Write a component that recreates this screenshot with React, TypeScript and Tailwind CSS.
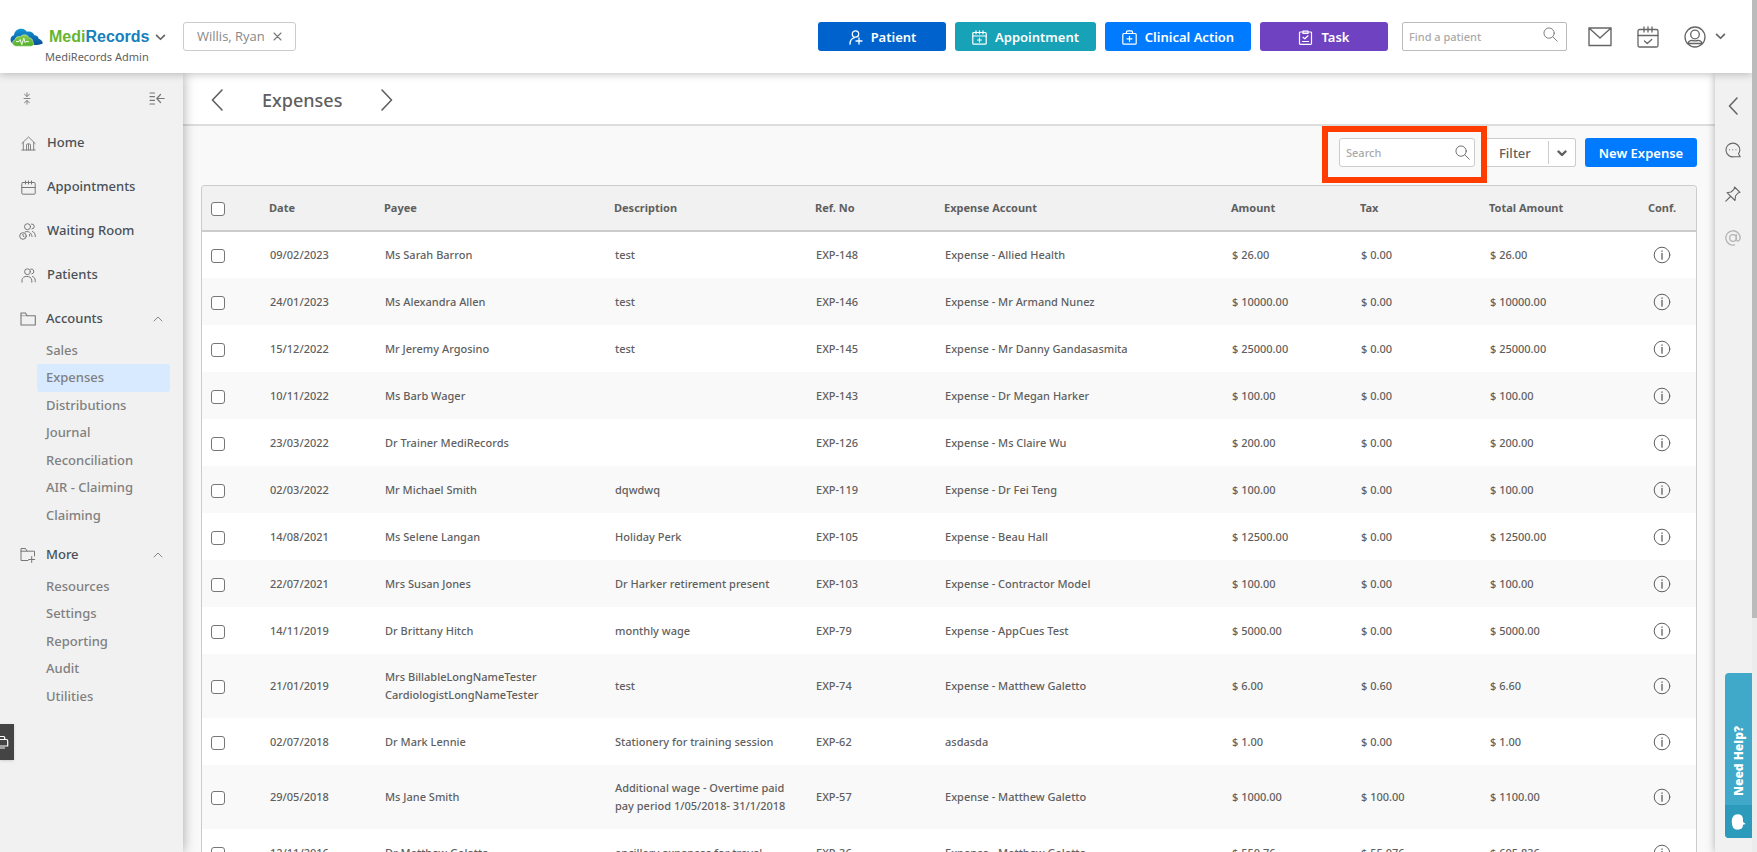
import React from "react";
import type { ReactNode } from "react";

type IconProps = { className?: string; children?: ReactNode; box?: string; sw?: number };

function Svg({ className = "", children, box = "0 0 24 24", sw = 1.5 }: IconProps) {
  return (
    <svg
      viewBox={box}
      className={className}
      fill="none"
      stroke="currentColor"
      strokeWidth={sw}
      strokeLinecap="round"
      strokeLinejoin="round"
      aria-hidden="true"
    >
      {children}
    </svg>
  );
}

function CloudLogo() {
  return (
    <svg viewBox="0 0 33 19" className="h-[19px] w-[33px]" aria-hidden="true">
      <defs>
        <linearGradient id="sky" x1="0" y1="0" x2="0" y2="1">
          <stop offset="0" stopColor="#1397d5" />
          <stop offset="1" stopColor="#0a4f96" />
        </linearGradient>
        <linearGradient id="leaf" x1="0" y1="0" x2="0" y2="1">
          <stop offset="0" stopColor="#8ccf4a" />
          <stop offset="1" stopColor="#4fae2c" />
        </linearGradient>
      </defs>
      <path
        d="M2.500 15.500C-.6 13 .1 8 4 7.200 4.300 3 8 .4 11.600.8c2.500.2 4.200 1.300 5.200 3 3-1 6.600.2 7.600 3.500 2.500.1 4 1.500 4.300 3.500 2.300.6 3.800 2.200 4.100 4.700-3 1.200-6 1.600-9 1.500H6c-1.400 0-2.600-.6-3.500-1.500z"
        fill="url(#sky)"
      />
      <path
        d="M6.500 18.200c-4.600 0-5.400-5.600-1.300-6.500.3-2.800 2.900-3.900 4.900-2.900C12.200 5.900 18 6 19.100 9.900c2.600.1 3.700 1.600 3.600 3.600 1.800 1.800.8 4.700-1.800 4.700z"
        fill="url(#leaf)"
        stroke="#e9f7dd"
        strokeWidth=".5"
      />
      <path d="M6 13.600h3l1.200-2 1.600 5 2-6.500 1.300 4.500.8-1h3" stroke="#fff" strokeWidth=".9" fill="none" />
    </svg>
  );
}

const ChevronDown = ({ className }: { className: string }) => (
  <Svg className={className} box="0 0 12 8" sw={2}>
    <path d="M1.500 1.500 6 6l4.500-4.500" />
  </Svg>
);
const Search = ({ className }: { className: string }) => (
  <Svg className={className} box="0 0 16 16" sw={1}>
    <circle cx="6.500" cy="6.500" r="5.500" />
    <path d="m10.500 10.500 4.700 4.700" />
  </Svg>
);
const HomeIcon = () => (
  <Svg className="size-[15px]" box="0 0 15 15" sw={0.9}>
    <path d="M.8 14h13.400M2.300 14V6.500M12.700 14V6.500M.8 7.500 7.500 1l6.700 6.500M5.500 14V9q0-1 1-1h2q1 0 1 1v5M7.500 8v6" />
  </Svg>
);
const CalendarIcon = () => (
  <Svg className="size-[15px]" box="0 0 15 15" sw={1}>
    <rect x=".8" y="2.500" width="13.400" height="11.700" rx="1" />
    <path d="M.8 7.500h13.400M4.500 1v3M7.500 1v3M10.500 1v3" />
  </Svg>
);
const WaitingIcon = () => (
  <Svg className="-ml-[2px] h-[17px] w-[17px]" box="0 0 17 17" sw={1}>
    <circle cx="8.500" cy="3.700" r="3" />
    <path d="M12.500 1a2.500 2.500 0 0 1 .5 5M6 9c3-1.500 6.500.5 7 4.500M13.500 8.500c1.800.7 2.800 2 2.800 5.200M10.500 11.500v1.500" />
    <circle cx="4" cy="13" r="3.300" />
    <path d="M4 11.300V13l1.200.8" />
  </Svg>
);
const PatientsIcon = () => (
  <Svg className="size-[15px]" box="0 0 15 15" sw={1}>
    <circle cx="6.500" cy="3.700" r="2.900" />
    <path d="M9.800 1a2.500 2.500 0 0 1 1 5M1 14.200v-2.500C1.500 7.500 10 7 10.800 12v2.200M11.500 8.500c1.700.5 2.700 1.700 2.700 4v1.300" />
  </Svg>
);
const FolderIcon = () => (
  <Svg className="size-[16px]" box="0 0 16 16" sw={1.1}>
    <path d="M1 14V2h4.500l1.500 2.700h8.300V14z" />
    <path d="M1 4.700h6" strokeWidth=".6" />
  </Svg>
);
const FolderPlusIcon = () => (
  <Svg className="size-[16px]" box="0 0 16 16" sw={1}>
    <path d="M8 13.500H1V1.500h4.500L7 4.200h7.500V9M1 4.200h6M11.700 9.500v6M8.700 12.500h6" />
  </Svg>
);
const InfoIcon = () => (
  <Svg className="size-[18px]" box="0 0 18 18" sw={1}>
    <circle cx="9" cy="9" r="7.800" />
    <path d="M9 7.500v5.700" strokeWidth="1.300" />
    <path d="M9 5v.3" strokeWidth="1.300" />
  </Svg>
);

const actions = [
  {
    label: "Patient",
    cls: "w-32 bg-[#0062cc]",
    icon: (
      <Svg className="size-[15px]" box="0 0 15 15" sw={1.3}>
        <circle cx="7.500" cy="4" r="3.200" />
        <path d="M2 14.200c0-3.500 1.500-5.700 4.500-6.500M11 8v6M8 11h6" />
      </Svg>
    ),
  },
  {
    label: "Appointment",
    cls: "w-[141px] bg-[#17a2b8]",
    icon: (
      <Svg className="size-[15px]" box="0 0 15 15" sw={1.2}>
        <rect x=".8" y="2.500" width="13.400" height="11.700" rx="1" />
        <path d="M.8 6h13.400M4 .8v3M7.500.8v3M11 .8v3M7.500 8v4M5.500 10h4" />
      </Svg>
    ),
  },
  {
    label: "Clinical Action",
    cls: "w-[146px] bg-[#007bff]",
    icon: (
      <Svg className="size-[15px]" box="0 0 15 15" sw={1.2}>
        <rect x=".8" y="3.500" width="13.400" height="10.700" rx="1" />
        <path d="M4.500 3.500V2q0-1.200 1.200-1.200h3.600q1.200 0 1.200 1.200v1.500M7.500 6.300v5M5 8.800h5" />
      </Svg>
    ),
  },
  {
    label: "Task",
    cls: "w-32 bg-[#6f42c1]",
    icon: (
      <Svg className="size-[15px]" box="0 0 15 15" sw={1.2}>
        <rect x="1.500" y="2" width="12" height="12.300" rx=".8" />
        <path d="M5 3.500V1h5v2.500zM5 7.300l1.800 1.500L10 5.800M4.500 11.500h6" />
      </Svg>
    ),
  },
];

const nav = [
  { label: "Home", icon: <HomeIcon /> },
  { label: "Appointments", icon: <CalendarIcon /> },
  { label: "Waiting Room", icon: <WaitingIcon /> },
  { label: "Patients", icon: <PatientsIcon /> },
];
const accounts = ["Sales", "Expenses", "Distributions", "Journal", "Reconciliation", "AIR - Claiming", "Claiming"];
const more = ["Resources", "Settings", "Reporting", "Audit", "Utilities"];

const rows: string[][] = [
  ["09/02/2023", "Ms Sarah Barron", "test", "EXP-148", "Expense - Allied Health", "$ 26.00", "$ 0.00", "$ 26.00"],
  ["24/01/2023", "Ms Alexandra Allen", "test", "EXP-146", "Expense - Mr Armand Nunez", "$ 10000.00", "$ 0.00", "$ 10000.00"],
  ["15/12/2022", "Mr Jeremy Argosino", "test", "EXP-145", "Expense - Mr Danny Gandasasmita", "$ 25000.00", "$ 0.00", "$ 25000.00"],
  ["10/11/2022", "Ms Barb Wager", "", "EXP-143", "Expense - Dr Megan Harker", "$ 100.00", "$ 0.00", "$ 100.00"],
  ["23/03/2022", "Dr Trainer MediRecords", "", "EXP-126", "Expense - Ms Claire Wu", "$ 200.00", "$ 0.00", "$ 200.00"],
  ["02/03/2022", "Mr Michael Smith", "dqwdwq", "EXP-119", "Expense - Dr Fei Teng", "$ 100.00", "$ 0.00", "$ 100.00"],
  ["14/08/2021", "Ms Selene Langan", "Holiday Perk", "EXP-105", "Expense - Beau Hall", "$ 12500.00", "$ 0.00", "$ 12500.00"],
  ["22/07/2021", "Mrs Susan Jones", "Dr Harker retirement present", "EXP-103", "Expense - Contractor Model", "$ 100.00", "$ 0.00", "$ 100.00"],
  ["14/11/2019", "Dr Brittany Hitch", "monthly wage", "EXP-79", "Expense - AppCues Test", "$ 5000.00", "$ 0.00", "$ 5000.00"],
  ["21/01/2019", "Mrs BillableLongNameTester CardiologistLongNameTester", "test", "EXP-74", "Expense - Matthew Galetto", "$ 6.00", "$ 0.60", "$ 6.60"],
  ["02/07/2018", "Dr Mark Lennie", "Stationery for training session", "EXP-62", "asdasda", "$ 1.00", "$ 0.00", "$ 1.00"],
  ["29/05/2018", "Ms Jane Smith", "Additional wage - Overtime paid pay period 1/05/2018- 31/1/2018", "EXP-57", "Expense - Matthew Galetto", "$ 1000.00", "$ 100.00", "$ 1100.00"],
  ["12/11/2016", "Dr Matthew Galetto", "ancillary expenses for travel", "EXP-36", "Expense - Matthew Galetto", "$ 550.76", "$ 55.076", "$ 605.836"],
];
const heads = ["Date", "Payee", "Description", "Ref. No", "Expense Account", "Amount", "Tax", "Total Amount"];

function Group({ label, icon }: { label: string; icon: ReactNode }) {
  return (
    <button type="button" className="flex h-10 w-full items-center pt-1 pr-5 pl-5 text-[#495057]">
      <span className="flex w-[26px] text-[#777]">{icon}</span>
      <span className="font-medium">{label}</span>
      <Svg className="ml-auto h-[6px] w-[10px] text-[#888]" box="0 0 10 6" sw={1}>
        <path d="m1 5 4-4 4 4" />
      </Svg>
    </button>
  );
}

function SubLink({ label, active = false }: { label: string; active?: boolean }) {
  return (
    <a
      href="#"
      aria-current={active ? "page" : undefined}
      className={
        active
          ? "flex items-center rounded-[3px] bg-[#d8eaff] pl-[9px] font-medium text-[#808080]"
          : "flex items-center pl-[9px] font-medium text-[#808080]"
      }
    >
      {label}
    </a>
  );
}

function Tick({ label }: { label: string }) {
  return (
    <input
      type="checkbox"
      aria-label={label}
      className="mt-[2px] block size-[14px] appearance-none rounded-[3px] border border-[#767676] bg-white"
    />
  );
}

export default function App() {
  return (
    <div className="relative flex h-screen overflow-hidden bg-white font-['Noto_Sans',sans-serif] text-[13px] text-[#5f5f5f]">
      <div className="flex min-w-0 flex-1 flex-col">
        <header className="relative z-20 flex h-[73px] shrink-0 items-start bg-white shadow-[0_1px_8px_rgba(0,0,0,0.25)]">
          <div className="w-[183px] pt-[25px] pl-[10px]">
            <div className="flex items-center">
              <CloudLogo />
              <span className="ml-[6px] font-['Liberation_Sans',sans-serif] text-base leading-6 font-bold text-[#67b52f]">
                Medi<span className="text-[#1580bd]">Records</span>
              </span>
              <button type="button" aria-label="Switch practice" className="ml-[6px]">
                <ChevronDown className="h-[7px] w-[11px] text-[#666]" />
              </button>
            </div>
            <div className="pl-[35px] text-[11px] leading-4">MediRecords Admin</div>
          </div>
          <button
            type="button"
            className="mt-[22px] flex h-[29px] items-center gap-2 rounded-[3px] border border-[#ccc] px-[13px] font-['Open_Sans',sans-serif] text-[#888]"
          >
            Willis, Ryan
            <Svg className="size-[9px] text-[#777]" box="0 0 9 9" sw={1.1}>
              <path d="m1 1 7 7M8 1 1 8" />
            </Svg>
          </button>
          <div className="mt-[22px] ml-auto flex h-[29px] gap-[9px]">
            {actions.map((a) => (
              <button
                key={a.label}
                type="button"
                className={"flex items-center justify-center gap-[8px] rounded-[3px] pt-[2px] font-semibold text-white " + a.cls}
              >
                {a.icon}
                {a.label}
              </button>
            ))}
          </div>
          <label className="mt-[22px] ml-[14px] flex h-[29px] w-[165px] items-center rounded-[2px] border border-[#bbb] px-[6px]">
            <input
              type="search"
              aria-label="Find a patient"
              placeholder="Find a patient"
              className="min-w-0 flex-1 pt-[2px] text-[11px] font-medium outline-none placeholder:text-[#aaa]"
            />
            <Search className="mr-[2px] mb-1 size-[15px] text-[#777]" />
          </label>
          <div className="mt-[22px] flex h-[29px] items-center pr-[26px] pl-[21px] text-[#666]">
            <button type="button" aria-label="Messages">
              <Svg className="h-[20px] w-[24px]" box="0 0 24 20" sw={1.4}>
                <path d="M1 1h22v17.500H1zM1 1l11 10L23 1" />
              </Svg>
            </button>
            <button type="button" aria-label="Calendar" className="ml-[25px]">
              <Svg className="h-[22px] w-[22px]" box="0 0 22 22" sw={1.3}>
                <rect x="1" y="3.500" width="20" height="17.500" rx="1.500" />
                <path d="M1 9.500h20M7 1v5M11 1v5M15 1v5M7.500 15l2.700 2.500 4.500-4" />
              </Svg>
            </button>
            <button type="button" aria-label="Profile" className="ml-[25px] flex items-center gap-[9px]">
              <Svg className="size-[22px]" box="0 0 22 22" sw={1.3}>
                <circle cx="11" cy="11" r="10" />
                <circle cx="11" cy="8.500" r="4.300" />
                <path d="M4 17.500c.5-2.500 2-3.200 4-3.200q3 1 6 0c2 0 3.500.7 4 3.200z" />
              </Svg>
              <ChevronDown className="h-[7px] w-[11px]" />
            </button>
          </div>
        </header>

        <div className="flex min-h-0 flex-1">
          <nav className="z-10 w-[183px] shrink-0 bg-[#f1f1f1] shadow-[0_0_12px_rgba(0,0,0,0.35)]">
            <div className="flex h-12 items-center justify-between pt-[3px] pr-[18px] pl-[23px] text-[#777]">
              <button type="button" aria-label="Collapse groups">
                <Svg className="h-[13px] w-[8px]" box="0 0 8 13" sw={0.9}>
                  <path d="M1 6.500h6M4 .8v3.500M4 8.700v3.500M1.500 2.300 4 4.500l2.500-2.200M1.500 10.700 4 8.500l2.500 2.200" />
                </Svg>
              </button>
              <button type="button" aria-label="Collapse menu">
                <Svg className="h-[13px] w-[16px]" box="0 0 16 13" sw={1.2}>
                  <path d="M1 1h4.500M1 4.700h4.500M1 8.300h4.500M1 12h4.500M15.200 6.500H8M11.500 2.500l-3.700 4 3.700 4" />
                </Svg>
              </button>
            </div>
            {nav.map((n) => (
              <a key={n.label} href="#" className="flex h-11 items-center pl-[21px] font-medium text-[#495057]">
                <span className="flex w-[26px] text-[#777]">{n.icon}</span>
                {n.label}
              </a>
            ))}
            <Group label="Accounts" icon={<FolderIcon />} />
            <div className="mr-[13px] mb-1 ml-[37px] grid h-48 grid-rows-7">
              {accounts.map((s) => (
                <SubLink key={s} label={s} active={s === "Expenses"} />
              ))}
            </div>
            <Group label="More" icon={<FolderPlusIcon />} />
            <div className="mr-[13px] ml-[37px] grid h-[137px] grid-rows-5">
              {more.map((s) => (
                <SubLink key={s} label={s} />
              ))}
            </div>
          </nav>

          <main className="flex min-w-0 flex-1 flex-col bg-[#f9f9f9]">
            <div className="flex h-[53px] shrink-0 items-center border-b-2 border-[#ddd] bg-white pt-[2px] pl-7">
              <button type="button" aria-label="Previous">
                <Svg className="h-[22px] w-[12px]" box="0 0 12 22" sw={1.6}>
                  <path d="M11 1 1.500 11 11 21" />
                </Svg>
              </button>
              <h1 className="mx-[39px] text-lg leading-6 font-medium">Expenses</h1>
              <button type="button" aria-label="Next">
                <Svg className="h-[22px] w-[12px]" box="0 0 12 22" sw={1.6}>
                  <path d="m1 1 9.500 10L1 21" />
                </Svg>
              </button>
            </div>

            <div className="flex h-[59px] shrink-0 items-start justify-end pr-[18px]">
              <div className="z-10 h-[57px] w-[165px] border-[6px] border-[#ff3d00] bg-[#f9f9f9] px-[11px] pt-[6px]">
                <label className="flex h-[29px] w-[136px] items-center rounded-[3px] border border-[#ccc] bg-white px-[6px]">
                  <input
                    type="search"
                    aria-label="Search"
                    placeholder="Search"
                    className="min-w-0 flex-1 pt-[2px] text-[11px] font-medium outline-none placeholder:text-[#aaa]"
                  />
                  <Search className="-mr-[2px] size-[15px] shrink-0 text-[#666]" />
                </label>
              </div>
              <div className="mt-3 flex h-[29px] w-[89px] items-stretch rounded-r-[3px] border border-l-0 border-[#ccc] bg-white">
                <button type="button" className="my-[2px] w-[62px] border-r border-[#ccc] pt-[2px] pl-[12px] text-left font-medium">
                  Filter
                </button>
                <button type="button" aria-label="Filter options" className="flex flex-1 items-center justify-center pt-[2px]">
                  <Svg className="h-[7px] w-[10px]" box="0 0 10 7" sw={2.4}>
                    <path d="m1.500 1.500 3.500 3.500 3.500-3.500" />
                  </Svg>
                </button>
              </div>
              <button
                type="button"
                className="mt-3 ml-[9px] h-[29px] w-28 rounded-[3px] bg-[#007bff] pt-[2px] font-semibold text-white"
              >
                New Expense
              </button>
            </div>

            <div className="mr-[18px] ml-[18px] min-h-0 flex-1 overflow-hidden rounded-t-[4px] border border-b-0 border-[#ccc]">
              <table className="w-full table-fixed text-left text-[11px] leading-[18px]">
                <colgroup>
                  <col className="w-[57px]" />
                  <col className="w-[115px]" />
                  <col className="w-[230px]" />
                  <col className="w-[201px]" />
                  <col className="w-[129px]" />
                  <col className="w-[287px]" />
                  <col className="w-[129px]" />
                  <col className="w-[129px]" />
                  <col className="w-[149px]" />
                  <col className="w-[68px]" />
                </colgroup>
                <thead>
                  <tr className="h-[45px] border-b-2 border-[#ccc] bg-[#f1f1f1]">
                    <th className="pl-[9px]">
                      <Tick label="Select all" />
                    </th>
                    {heads.map((h) => (
                      <th key={h} className="px-[10px] font-bold">
                        {h}
                      </th>
                    ))}
                    <th className="text-center font-bold">Conf.</th>
                  </tr>
                </thead>
                <tbody>
                  {rows.map((r) => (
                    <tr key={r[3]} className="h-[47px] bg-white font-medium even:bg-[#f9f9f9]">
                      <td className="pl-[9px]">
                        <Tick label={"Select " + r[3]} />
                      </td>
                      {r.map((c, i) => (
                        <td key={i} className="py-[14px] pr-[8px] pl-[11px]">
                          {c}
                        </td>
                      ))}
                      <td>
                        <button type="button" aria-label={"Details of " + r[3]} className="mx-auto flex">
                          <InfoIcon />
                        </button>
                      </td>
                    </tr>
                  ))}
                </tbody>
              </table>
            </div>
          </main>

          <aside className="z-10 flex w-[37px] shrink-0 flex-col items-center bg-[#f1f1f1] pt-[24px] pr-[2px] text-[#666] shadow-[0_0_8px_rgba(0,0,0,0.3)]">
            <button type="button" aria-label="Expand panel">
              <Svg className="h-[18px] w-[10px]" box="0 0 10 18" sw={1.6}>
                <path d="M9 1 1.500 9 9 17" />
              </Svg>
            </button>
            <button type="button" aria-label="Chat" className="mt-[27px]">
              <Svg className="size-[16px]" box="0 0 16 16" sw={1.1}>
                <path d="M9 14.800A6.900 6.900 0 1 1 14.800 8c0 1.500-.5 2.700-1.300 3.700l1.700 3.100zM4.500 7.700h.1M7.700 7.700h.1M10.900 7.700h.1" />
              </Svg>
            </button>
            <button type="button" aria-label="Pin" className="mt-[28px]">
              <Svg className="size-[16px]" box="0 0 16 16" sw={1.1}>
                <path d="m9.500 1 5.500 5.300-2 .7-2.500 3-.5 4.500-8-7.800L6 6l3-2.700zM5.500 10.500.8 15.200" />
              </Svg>
            </button>
            <button type="button" aria-label="Mentions" className="mt-[28px] text-[#b5b5b5]">
              <Svg className="size-[16px]" box="0 0 16 16" sw={1.3}>
                <circle cx="8" cy="8" r="3.300" />
                <path d="M11.300 4.700V9.500c0 2.500 3.900 2 3.900-1.500A7.200 7.200 0 1 0 9.500 15" />
              </Svg>
            </button>
          </aside>
        </div>
      </div>

      <div className="z-20 w-[5px] shrink-0 bg-[#ececec]">
        <div className="h-[618px] bg-[#bbb]" />
      </div>

      <button
        type="button"
        aria-label="Open toolbox"
        className="absolute top-[724px] left-0 z-30 flex h-9 w-[14px] items-center bg-[#444] text-white shadow"
      >
        <Svg className="h-[14px] w-[9px]" box="0 0 9 14" sw={1.2}>
          <path d="M0 1.500h3.500q1.200 0 1.200 1.500v1.500M0 4.500h6.500q1.200 0 1.200 1.500v5H0M0 13h4.500" />
        </Svg>
      </button>

      <button
        type="button"
        className="absolute right-[5px] bottom-[14px] z-30 flex h-[165px] w-[27px] flex-col items-center overflow-hidden rounded-l-[4px] bg-[#40a9c9] text-white"
      >
        <span className="flex flex-1 rotate-180 items-center pt-[9px] text-[12px] leading-4 font-black [writing-mode:vertical-rl]">
          Need Help?
        </span>
        <span className="flex h-[33px] w-full items-center justify-center bg-[#2b9abb]">
          <svg viewBox="0 0 15 16" className="h-[16px] w-[15px]" fill="currentColor" aria-hidden="true">
            <path d="M6.500.3Q12 .3 12 5.500V8l2.700 2-2.700.8q0 4.900-5.500 4.900Q.8 15.700.8 8T6.500.3z" />
          </svg>
        </span>
      </button>
    </div>
  );
}
